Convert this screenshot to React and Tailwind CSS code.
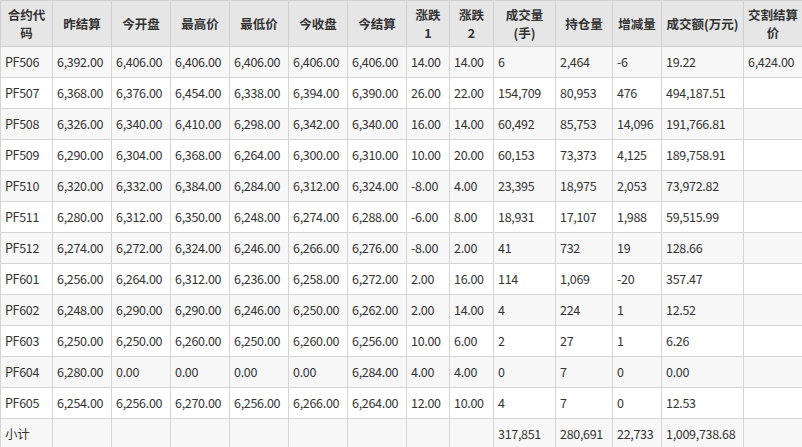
const widths=[52,59,59,59,59,59,59,43,44,62,57,49,82,59];
const head=["合约代码","昨结算","今开盘","最高价","最低价","今收盘","今结算","涨跌1","涨跌2","成交量(手)","持仓量","增减量","成交额(万元)","交割结算价"];
const rows=[
["PF506","6,392.00","6,406.00","6,406.00","6,406.00","6,406.00","6,406.00","14.00","14.00","6","2,464","-6","19.22","6,424.00"],
["PF507","6,368.00","6,376.00","6,454.00","6,338.00","6,394.00","6,390.00","26.00","22.00","154,709","80,953","476","494,187.51",""],
["PF508","6,326.00","6,340.00","6,410.00","6,298.00","6,342.00","6,340.00","16.00","14.00","60,492","85,753","14,096","191,766.81",""],
["PF509","6,290.00","6,304.00","6,368.00","6,264.00","6,300.00","6,310.00","10.00","20.00","60,153","73,373","4,125","189,758.91",""],
["PF510","6,320.00","6,332.00","6,384.00","6,284.00","6,312.00","6,324.00","-8.00","4.00","23,395","18,975","2,053","73,972.82",""],
["PF511","6,280.00","6,312.00","6,350.00","6,248.00","6,274.00","6,288.00","-6.00","8.00","18,931","17,107","1,988","59,515.99",""],
["PF512","6,274.00","6,272.00","6,324.00","6,246.00","6,266.00","6,276.00","-8.00","2.00","41","732","19","128.66",""],
["PF601","6,256.00","6,264.00","6,312.00","6,236.00","6,258.00","6,272.00","2.00","16.00","114","1,069","-20","357.47",""],
["PF602","6,248.00","6,290.00","6,290.00","6,246.00","6,250.00","6,262.00","2.00","14.00","4","224","1","12.52",""],
["PF603","6,250.00","6,250.00","6,260.00","6,250.00","6,260.00","6,256.00","10.00","6.00","2","27","1","6.26",""],
["PF604","6,280.00","0.00","0.00","0.00","0.00","6,284.00","4.00","4.00","0","7","0","0.00",""],
["PF605","6,254.00","6,256.00","6,270.00","6,256.00","6,266.00","6,264.00","12.00","10.00","4","7","0","12.53",""],
["小计","","","","","","","","","317,851","280,691","22,733","1,009,738.68",""],
];
const hd=[["合约代","码"],["昨结算"],["今开盘"],["最高价"],["最低价"],["今收盘"],["今结算"],["涨跌","1"],["涨跌","2"],["成交量","(手)"],["持仓量"],["增减量"],["成交额(万元)"],["交割结算","价"]];
export default function App(){
return <div className="w-[802px] h-[447px] overflow-hidden bg-white" style={{fontFamily:'"Noto Sans CJK SC","Noto Sans",sans-serif'}}>
<table className="border-collapse table-fixed text-[12.5px] text-[#333]" style={{width:802}}>
<colgroup>{widths.map((w,i)=><col key={i} style={{width:w}}/>)}</colgroup>
<thead><tr className="bg-[#e6e6e6] h-[46px]">{hd.map((h,i)=><th key={i} className="border border-[#cfcfcf] font-bold text-center leading-[18px] px-0 whitespace-nowrap">{h.map((l,j)=><div key={j}>{l}</div>)}</th>)}</tr></thead>
<tbody>{rows.map((r,i)=><tr key={i} className={(i%2===0?"bg-[#f7f7f7]":"bg-white")+" h-[31px]"}>{r.map((c,j)=><td key={j} className="border border-[#d5d5d5] px-[4px] whitespace-nowrap tracking-[-0.3px]">{c}</td>)}</tr>)}</tbody>
</table></div>}
